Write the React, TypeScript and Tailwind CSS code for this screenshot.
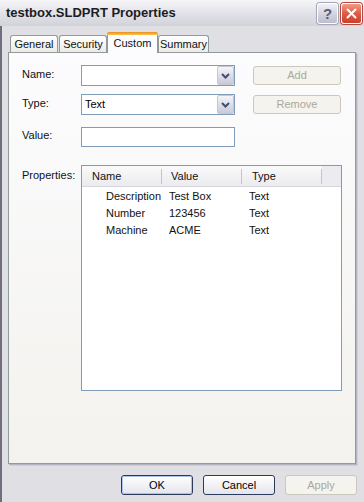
import React from "react";

function Chevron() {
  return (
    <svg width="9" height="6" viewBox="0 0 9 6">
      <path d="M1 1 L4.5 4.5 L8 1" stroke="#3d4e70" strokeWidth="2" fill="none" />
    </svg>
  );
}

function Combo({ value }: { value?: string }) {
  return (
    <div className="w-[154px] h-[21px] border border-[#7f9db9] bg-white flex items-center">
      <span className="flex-1 pl-[3px] text-black">{value}</span>
      <div className="w-[17px] h-[19px] rounded-[2px] border border-[#c6c6d4] bg-linear-to-b from-[#f4f4f8] to-[#c9c9da] flex items-center justify-center">
        <Chevron />
      </div>
    </div>
  );
}

function DisabledButton({ label, className }: { label: string; className: string }) {
  return (
    <div
      className={
        "rounded-[3px] border border-[#cac8bc] bg-[#f4f3ee] text-[#aca899] flex items-center justify-center " +
        className
      }
    >
      {label}
    </div>
  );
}

function Tab({ label, selected, className }: { label: string; selected?: boolean; className?: string }) {
  if (selected) {
    return (
      <div
        className={
          "relative z-10 -mb-px h-[21px] rounded-t-[3px] border border-b-0 border-[#919b9c] bg-[#fcfcfe] flex flex-col " +
          (className || "")
        }
      >
        <div className="h-[3px] -mx-px -mt-px rounded-t-[3px] bg-linear-to-b from-[#e68b2c] to-[#ffc73c]" />
        <div className="flex-1 flex items-center justify-center pb-[2px]">{label}</div>
      </div>
    );
  }
  return (
    <div
      className={
        "h-[17px] rounded-t-[3px] border border-b-0 border-[#919b9c] bg-linear-to-b from-[#ffffff] to-[#ecebe6] flex items-center justify-center " +
        (className || "")
      }
    >
      {label}
    </div>
  );
}

function XPButton({ label, def }: { label: string; def?: boolean }) {
  return (
    <div className="w-[72px] h-[20px] rounded-[3px] border border-[#2a3a5c] bg-linear-to-b from-[#ffffff] to-[#e4e4ec] flex items-center justify-center">
      <div
        className={
          "w-full h-full rounded-[2px] flex items-center justify-center text-black " +
          (def ? "border border-[#a9c3ec]" : "")
        }
      >
        {label}
      </div>
    </div>
  );
}

const rows = [
  ["Description", "Test Box", "Text"],
  ["Number", "123456", "Text"],
  ["Machine", "ACME", "Text"],
];

export default function App() {
  return (
    <div className="w-[364px] h-[502px] flex flex-col bg-[#e0dfe4] font-['Liberation_Sans',Arial,sans-serif] text-[11px] text-[#111] overflow-hidden">
      {/* Title bar */}
      <div className="h-[26px] flex items-center pl-[6px] pr-[2px] bg-linear-to-b from-[#f6f6f9] via-[#e2e2e9] to-[#d2d2da]">
        <span className="flex-1 text-[13px] font-bold text-[#1c1c22]">testbox.SLDPRT Properties</span>
        <div className="flex gap-[3px] items-center">
          <div className="w-[21px] h-[21px] rounded-[3px] border border-white bg-linear-to-b from-[#f0f0f6] to-[#bcbccd] flex items-center justify-center shadow-[0_0_0_1px_#a6a6b8]">
            <span className="text-[15px] font-bold text-[#55607a] leading-none">?</span>
          </div>
          <div className="w-[21px] h-[21px] rounded-[3px] border border-white bg-linear-to-b from-[#f09a88] via-[#de5b47] to-[#c8412f] flex items-center justify-center shadow-[0_0_0_1px_#b04a3e]">
            <svg width="11" height="11" viewBox="0 0 11 11">
              <path d="M1.5 1.5 L9.5 9.5 M9.5 1.5 L1.5 9.5" stroke="#fff" strokeWidth="2" strokeLinecap="round" />
            </svg>
          </div>
        </div>
      </div>

      {/* Body */}
      <div className="flex-1 flex flex-col border-l-2 border-[#6e6e7c] pl-[6px]">
        {/* Tabs */}
        <div className="h-[26px] flex items-end pl-[2px]">
          <Tab label="General" className="w-[48px]" />
          <Tab label="Security" className="w-[48px] ml-px" />
          <Tab label="Custom" selected className="w-[51px]" />
          <Tab label="Summary" className="w-[51px]" />
        </div>

        {/* Panel */}
        <div className="w-[348px] h-[412px] border border-[#919b9c] bg-linear-to-b from-[#fcfcfe] to-[#f3f2ee] shadow-[1px_1px_0_#b4b4c2,2px_2px_0_#cfcfd8] pl-[13px] pt-[12px] flex flex-col">
          <div className="flex items-center h-[21px]">
            <span className="w-[59px] -mt-[2px]">Name:</span>
            <Combo />
            <DisabledButton label="Add" className="ml-[18px] w-[88px] h-[19px]" />
          </div>
          <div className="flex items-center h-[21px] mt-[8px]">
            <span className="w-[59px] -mt-[2px]">Type:</span>
            <Combo value="Text" />
            <DisabledButton label="Remove" className="ml-[18px] w-[88px] h-[19px]" />
          </div>
          <div className="flex items-center h-[20px] mt-[12px]">
            <span className="w-[59px] -mt-[4px]">Value:</span>
            <div className="w-[154px] h-[20px] border border-[#7f9db9] bg-white" />
          </div>
          <div className="flex mt-[18px]">
            <span className="w-[59px] pt-[2px]">Properties:</span>
            <div className="w-[261px] h-[226px] border border-[#7f9db9] bg-white flex flex-col">
              <div className="h-[21px] flex items-center bg-linear-to-b from-[#fafafb] to-[#ebebef] border-b border-[#d5d5dc]">
                <div className="w-[79px] pl-[10px] pt-[1px]">Name</div>
                <div className="w-px h-[15px] bg-[#c4c4cc]" />
                <div className="w-[79px] pl-[9px] pt-[1px]">Value</div>
                <div className="w-px h-[15px] bg-[#c4c4cc]" />
                <div className="w-[79px] pl-[10px] pt-[1px]">Type</div>
                <div className="w-px h-[15px] bg-[#c4c4cc]" />
                <div className="flex-1 h-full bg-[#ececf0]" />
              </div>
              <div className="flex flex-col pt-[1px]">
                {rows.map((r) => (
                  <div key={r[0]} className="h-[17px] flex items-center">
                    <div className="w-[80px] pl-[24px]">{r[0]}</div>
                    <div className="w-[80px] pl-[7px]">{r[1]}</div>
                    <div className="w-[80px] pl-[7px]">{r[2]}</div>
                  </div>
                ))}
              </div>
            </div>
          </div>
        </div>

        {/* Buttons */}
        <div className="flex justify-end gap-[10px] pr-[7px] mt-[11px]">
          <XPButton label="OK" def />
          <XPButton label="Cancel" />
          <DisabledButton label="Apply" className="w-[72px] h-[20px]" />
        </div>
      </div>
    </div>
  );
}
